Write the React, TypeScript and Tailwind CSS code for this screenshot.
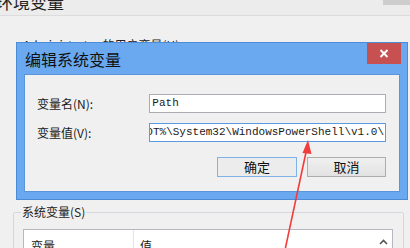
import React from "react";

const cjk = { fontFamily: '"Noto Sans CJK SC", "Noto Sans", sans-serif' };
const mono = { fontFamily: '"Liberation Mono", "Noto Sans CJK SC", monospace' };

export default function App() {
  return (
    <div
      className="relative w-[410px] h-[248px] overflow-hidden bg-[#f0f0f0] text-[#1a1a1a]"
      style={cjk}
    >
      {/* background window */}
      <div className="h-[16px] bg-[#ececec] border-b border-[#dcdcdc] flex justify-between items-start overflow-hidden">
        <span className="-mt-[8px] -ml-[4px] text-[17px] leading-[20px] text-[#222]">环境变量</span>
        <div className="w-[27px] h-[5px] bg-[#cdcdcd]" />
      </div>
      <div className="pl-[23px] pt-[22px] text-[12px] leading-[14px] text-[#222]">
        Administrator 的用户变量(U)
      </div>
      <fieldset className="mt-[153px] ml-[13px] mr-[6px] border border-[#d5d9dd] rounded-[2px] h-[60px]">
        <legend className="ml-[7px] px-[1px] text-[12px] leading-[14px] text-[#222]">
          系统变量(S)
        </legend>
        <div className="mt-[10px] ml-[9px] mr-[10px] h-[40px] bg-white border border-[#b5b9bf] flex text-[12px]">
          <div className="w-[110px] border-r border-[#e5e5e5] pl-[7px] pt-[9px] leading-[14px]">变量</div>
          <div className="flex-1 pl-[6px] pt-[9px] leading-[14px]">值</div>
          <div className="w-[17px] flex justify-center pt-[9px]">
            <svg width="9" height="6" viewBox="0 0 9 6">
              <path d="M1 5 L4.5 1.5 L8 5" stroke="#555" strokeWidth="1.6" fill="none" />
            </svg>
          </div>
        </div>
      </fieldset>

      {/* dialog */}
      <div className="absolute left-[16px] top-[42px] w-[392px] h-[158px] bg-[#6aa9f0] border border-[#4c8bd6] flex flex-col px-[7px] pb-[7px]">
        <div className="h-[31px] flex items-start justify-between shrink-0">
          <span className="pl-[1px] pt-[6px] text-[16px] leading-[20px] text-[#111]">编辑系统变量</span>
          <div className="w-[34px] h-[21px] bg-[#c75050] flex items-center justify-center -mr-[1px]">
            <svg width="10" height="9" viewBox="0 0 10 9">
              <path d="M1.5 1 L8.5 8 M8.5 1 L1.5 8" stroke="#ffffff" strokeWidth="2" />
            </svg>
          </div>
        </div>
        <div className="flex-1 bg-[#f0f0f0] border border-[#5b95dc] flex flex-col pl-[12px] pr-[13px] pt-[19px]">
          <div className="flex items-center h-[19px]">
            <span className="w-[113px] text-[12px] leading-[14px]">变量名(N):</span>
            <div
              className="w-[238px] h-[19px] bg-white border border-[#abadb3] pl-[2px] text-[11px] leading-[17px] overflow-hidden whitespace-nowrap"
              style={mono}
            >
              Path
            </div>
          </div>
          <div className="flex items-center h-[19px] mt-[10px]">
            <span className="w-[113px] text-[12px] leading-[14px]">变量值(V):</span>
            <div
              className="w-[238px] h-[19px] bg-white border border-[#5a9be0] pr-[1px] text-[11px] leading-[17px] overflow-hidden whitespace-nowrap flex justify-end"
              style={mono}
            >
              <span className="shrink-0">%SYSTEMROOT%\System32\WindowsPowerShell\v1.0\</span>
            </div>
          </div>
          <div className="flex justify-end gap-[10px] mt-[15px]">
            <button className="w-[80px] h-[20px] border border-[#7fb2e8] bg-[#ececec] text-[13px] leading-[16px] text-[#111]">
              确定
            </button>
            <button className="w-[79px] h-[20px] border border-[#adadad] bg-gradient-to-b from-[#f0f0f0] to-[#e2e2e2] text-[13px] leading-[16px] text-[#111]">
              取消
            </button>
          </div>
        </div>
      </div>

      {/* red arrow annotation */}
      <svg className="absolute left-0 top-0 pointer-events-none" width="410" height="248" viewBox="0 0 410 248">
        <line x1="306.5" y1="150" x2="285" y2="250" stroke="#f23b3b" strokeWidth="1.6" />
        <polygon points="308,140 302.5,153 311.5,154" fill="#f23b3b" />
      </svg>
    </div>
  );
}
